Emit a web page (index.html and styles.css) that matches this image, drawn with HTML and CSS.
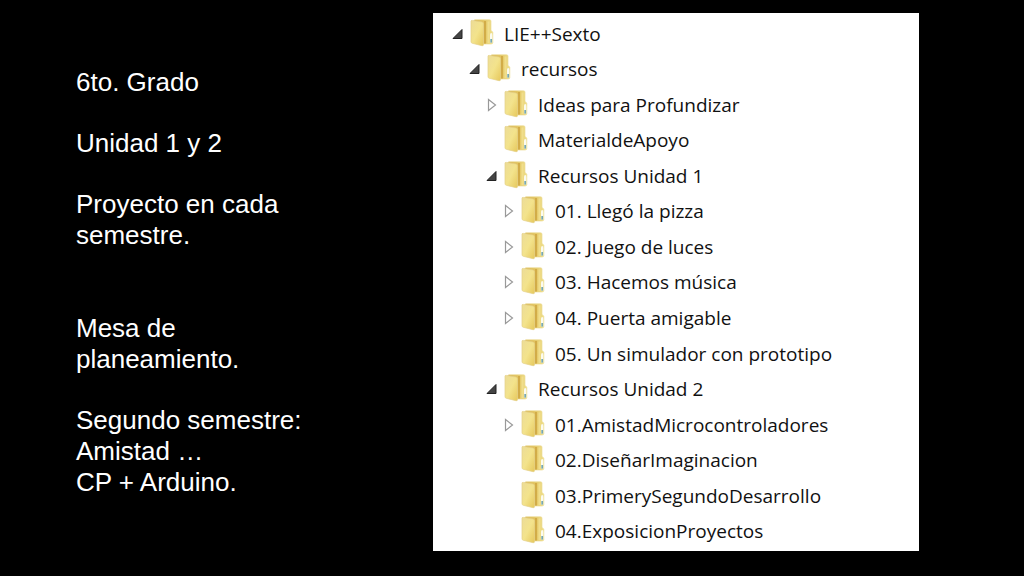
FILE: index.html
```html
<!DOCTYPE html>
<html lang="es">
<head>
<meta charset="utf-8">
<meta name="viewport" content="width=device-width, initial-scale=1">
<title>6to. Grado</title>
<link rel="stylesheet" href="styles.css">
</head>
<body>
<svg class="defs" aria-hidden="true">
  <defs>
    <linearGradient id="back" x1="0" y1="0" x2="1" y2="0">
      <stop offset="0" stop-color="#d8b450"/><stop offset=".45" stop-color="#e0c05a"/><stop offset="1" stop-color="#f0e08c"/>
    </linearGradient>
    <linearGradient id="front" x1="0" y1="0" x2="1" y2="1">
      <stop offset="0" stop-color="#ecdc98"/><stop offset=".5" stop-color="#f3e38c"/><stop offset="1" stop-color="#e6c85c"/>
    </linearGradient>
  </defs>
  <symbol id="folder" viewBox="0 0 24 28">
    <path d="M4 1.500Q4 .8 5 .8H19.500Q21 .8 21 2.200V11.500L22.800 13V23.500Q22.800 25 21 25H9Z" fill="url(#back)" stroke="#ecdc98" stroke-width=".7"/>
    <path d="M15 2V24.500" stroke="#d2ac48" stroke-width="2"/>
    <path d="M18.500 2.500V24" stroke="#f0de8c" stroke-width="2"/>
    <path d="M1 2.200Q1 1.200 2.300 1.400L12 3Q13.500 3.400 13.500 5V25.500Q13.500 27 12 26.700L2.300 24.300Q1 24 1 22.800Z" fill="url(#front)" stroke="#e4d088" stroke-width=".7"/>
    <path d="M20 16Q20 14 21.200 14T22.300 16V23.500H20Z" fill="#fbfbf0"/>
    <path d="M20.300 20H22.100V23.600H20.300Z" fill="#78a8b0"/>
  </symbol>
  <symbol id="open" viewBox="0 0 14 14">
    <path d="M11 2.500V11.500H2Z" fill="#454545" stroke="#222" stroke-width="1" stroke-linejoin="round"/>
  </symbol>
  <symbol id="closed" viewBox="0 0 14 14">
    <path d="M3.500 1.500L10.500 7L3.500 12.500Z" fill="#fff" stroke="#999" stroke-width="1.200"/>
  </symbol>
</svg>
<main class="slide">
  <section class="notes">
    <p>6to. Grado</p>
    <p>Unidad 1 y 2</p>
    <p>Proyecto en cada semestre.</p>
    <p class="topic">Mesa de planeamiento.</p>
    <p>Segundo semestre:<br>Amistad …<br>CP + Arduino.</p>
  </section>
  <ul class="tree" role="tree" aria-label="Carpetas">
    <li class="row" role="treeitem" aria-level="1"><button class="toggle" aria-label="Contraer LIE++Sexto" aria-expanded="true"><svg><use href="#open"/></svg></button><svg class="folder"><use href="#folder"/></svg><span>LIE++Sexto</span></li>
    <li class="row level-2" role="treeitem" aria-level="2"><button class="toggle" aria-label="Contraer recursos" aria-expanded="true"><svg><use href="#open"/></svg></button><svg class="folder"><use href="#folder"/></svg><span>recursos</span></li>
    <li class="row level-3" role="treeitem" aria-level="3"><button class="toggle" aria-label="Expandir Ideas para Profundizar" aria-expanded="false"><svg><use href="#closed"/></svg></button><svg class="folder"><use href="#folder"/></svg><span>Ideas para Profundizar</span></li>
    <li class="row level-3 leaf" role="treeitem" aria-level="3"><svg class="folder"><use href="#folder"/></svg><span>MaterialdeApoyo</span></li>
    <li class="row level-3" role="treeitem" aria-level="3"><button class="toggle" aria-label="Contraer Recursos Unidad 1" aria-expanded="true"><svg><use href="#open"/></svg></button><svg class="folder"><use href="#folder"/></svg><span>Recursos Unidad 1</span></li>
    <li class="row level-4" role="treeitem" aria-level="4"><button class="toggle" aria-label="Expandir 01. Llegó la pizza" aria-expanded="false"><svg><use href="#closed"/></svg></button><svg class="folder"><use href="#folder"/></svg><span>01. Llegó la pizza</span></li>
    <li class="row level-4" role="treeitem" aria-level="4"><button class="toggle" aria-label="Expandir 02. Juego de luces" aria-expanded="false"><svg><use href="#closed"/></svg></button><svg class="folder"><use href="#folder"/></svg><span>02. Juego de luces</span></li>
    <li class="row level-4" role="treeitem" aria-level="4"><button class="toggle" aria-label="Expandir 03. Hacemos música" aria-expanded="false"><svg><use href="#closed"/></svg></button><svg class="folder"><use href="#folder"/></svg><span>03. Hacemos música</span></li>
    <li class="row level-4" role="treeitem" aria-level="4"><button class="toggle" aria-label="Expandir 04. Puerta amigable" aria-expanded="false"><svg><use href="#closed"/></svg></button><svg class="folder"><use href="#folder"/></svg><span>04. Puerta amigable</span></li>
    <li class="row level-4 leaf" role="treeitem" aria-level="4"><svg class="folder"><use href="#folder"/></svg><span>05. Un simulador con prototipo</span></li>
    <li class="row level-3" role="treeitem" aria-level="3"><button class="toggle" aria-label="Contraer Recursos Unidad 2" aria-expanded="true"><svg><use href="#open"/></svg></button><svg class="folder"><use href="#folder"/></svg><span>Recursos Unidad 2</span></li>
    <li class="row level-4" role="treeitem" aria-level="4"><button class="toggle" aria-label="Expandir 01.AmistadMicrocontroladores" aria-expanded="false"><svg><use href="#closed"/></svg></button><svg class="folder"><use href="#folder"/></svg><span>01.AmistadMicrocontroladores</span></li>
    <li class="row level-4 leaf" role="treeitem" aria-level="4"><svg class="folder"><use href="#folder"/></svg><span>02.DiseñarImaginacion</span></li>
    <li class="row level-4 leaf" role="treeitem" aria-level="4"><svg class="folder"><use href="#folder"/></svg><span>03.PrimerySegundoDesarrollo</span></li>
    <li class="row level-4 leaf" role="treeitem" aria-level="4"><svg class="folder"><use href="#folder"/></svg><span>04.ExposicionProyectos</span></li>
  </ul>
</main>
</body>
</html>
```
FILE: styles.css
```css
* {
  box-sizing: border-box;
}

body {
  margin: 0;
  background: #000;
}

.defs {
  position: absolute;
  width: 0;
  height: 0;
}

.slide {
  display: grid;
  grid-template-columns: 240px 1fr;
  column-gap: 117px;
  min-height: 100vh;
  padding: 13px 105px 25px 76px;
}

.notes {
  padding-top: 54px;
  color: #fff;
  font: 26px/31px "Liberation Sans", Arial, sans-serif;
}

.notes p {
  margin: 0 0 30px;
}

.notes .topic {
  margin-top: 62px;
}

.tree {
  display: grid;
  grid-auto-rows: 1fr;
  margin: 0;
  padding: 3px 0 2px;
  list-style: none;
  background: #fff;
  color: #111;
  font: 19px/28px "Open Sans", "Noto Sans", sans-serif;
}

.row {
  display: flex;
  align-items: center;
  padding-left: 18px;
  white-space: nowrap;
}

.level-2 {
  padding-left: 35px;
}

.level-3 {
  padding-left: 52px;
}

.level-4 {
  padding-left: 69px;
}

.toggle {
  width: 14px;
  height: 14px;
  padding: 0;
  border: 0;
  background: none;
}

.toggle svg {
  display: block;
  width: 14px;
  height: 14px;
}

.folder {
  width: 24px;
  height: 28px;
  margin: 0 10px 2px 5px;
}

.leaf .folder {
  margin-left: 19px;
}
```
